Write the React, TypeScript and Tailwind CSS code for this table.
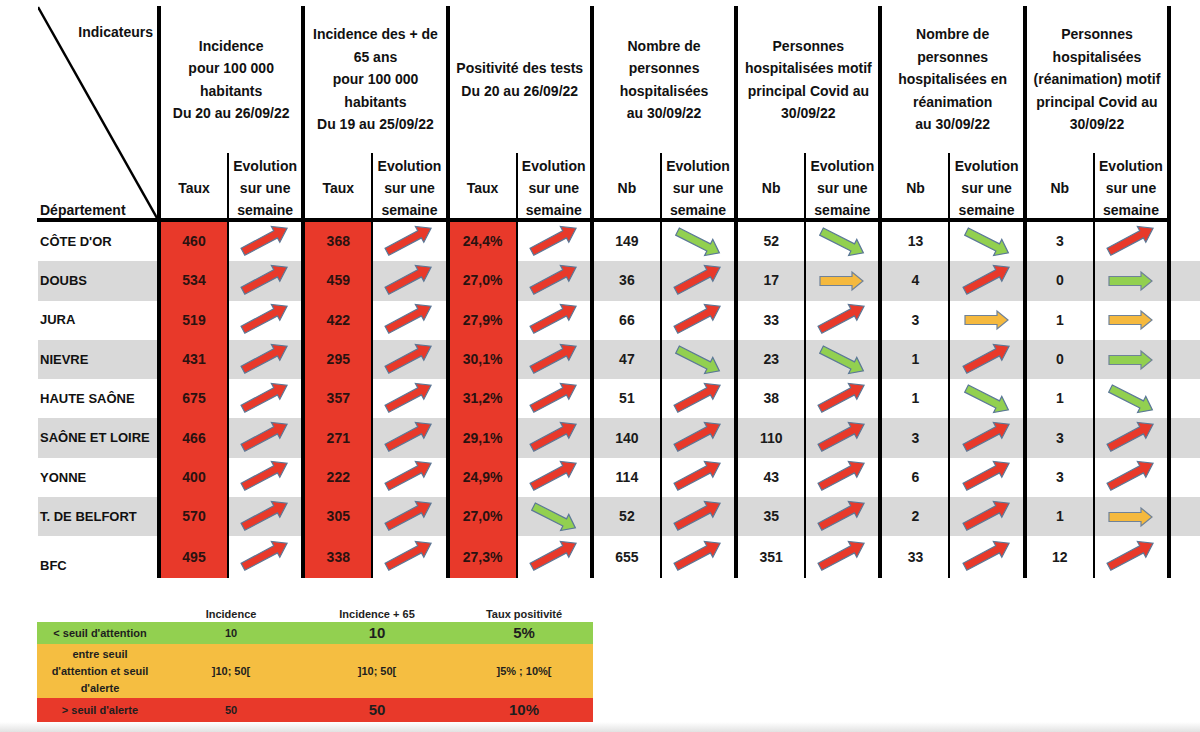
type Dir = 'u' | 'd' | 'y' | 'g'

const groups = [
  { title: ['Incidence', 'pour 100 000', 'habitants', 'Du 20 au 26/09/22'], sub: 'Taux' },
  { title: ['Incidence des + de', '65 ans', 'pour 100 000', 'habitants', 'Du 19 au 25/09/22'], sub: 'Taux' },
  { title: ['Positivité des tests', 'Du 20 au 26/09/22'], sub: 'Taux' },
  { title: ['Nombre de', 'personnes', 'hospitalisées', 'au 30/09/22'], sub: 'Nb' },
  { title: ['Personnes', 'hospitalisées motif', 'principal Covid au', '30/09/22'], sub: 'Nb' },
  { title: ['Nombre de', 'personnes', 'hospitalisées en', 'réanimation', 'au 30/09/22'], sub: 'Nb' },
  { title: ['Personnes', 'hospitalisées', '(réanimation) motif', 'principal Covid au', '30/09/22'], sub: 'Nb' },
]

const rows: { name: string; v: string[]; a: Dir[] }[] = [
  { name: "CÔTE D'OR", v: ['460', '368', '24,4%', '149', '52', '13', '3'], a: ['u', 'u', 'u', 'd', 'd', 'd', 'u'] },
  { name: 'DOUBS', v: ['534', '459', '27,0%', '36', '17', '4', '0'], a: ['u', 'u', 'u', 'u', 'y', 'u', 'g'] },
  { name: 'JURA', v: ['519', '422', '27,9%', '66', '33', '3', '1'], a: ['u', 'u', 'u', 'u', 'u', 'y', 'y'] },
  { name: 'NIEVRE', v: ['431', '295', '30,1%', '47', '23', '1', '0'], a: ['u', 'u', 'u', 'd', 'd', 'u', 'g'] },
  { name: 'HAUTE SAÔNE', v: ['675', '357', '31,2%', '51', '38', '1', '1'], a: ['u', 'u', 'u', 'u', 'u', 'd', 'd'] },
  { name: 'SAÔNE ET LOIRE', v: ['466', '271', '29,1%', '140', '110', '3', '3'], a: ['u', 'u', 'u', 'u', 'u', 'u', 'u'] },
  { name: 'YONNE', v: ['400', '222', '24,9%', '114', '43', '6', '3'], a: ['u', 'u', 'u', 'u', 'u', 'u', 'u'] },
  { name: 'T. DE BELFORT', v: ['570', '305', '27,0%', '52', '35', '2', '1'], a: ['u', 'u', 'd', 'u', 'u', 'u', 'y'] },
  { name: 'BFC', v: ['495', '338', '27,3%', '655', '351', '33', '12'], a: ['u', 'u', 'u', 'u', 'u', 'u', 'u'] },
]

function Arrow({ dir }: { dir: Dir }) {
  if (dir === 'y' || dir === 'g') {
    return (
      <svg width="56" height="36" viewBox="0 0 56 36">
        <polygon
          points="6,13.5 38,13.5 38,9 49,18 38,27 38,22.5 6,22.5"
          fill={dir === 'y' ? '#f5b93e' : '#92d050'}
          stroke="#6f8299"
          strokeWidth="1.2"
        />
      </svg>
    )
  }
  const up = dir === 'u'
  return (
    <svg width="56" height="36" viewBox="0 0 56 36">
      <g transform={up ? 'rotate(-28 28 16)' : 'rotate(27 28 18)'}>
        <polygon
          points={up ? '3,12 40,12 40,7 53,16 40,25 40,20 3,20' : '5,14 40,14 40,9 52,18 40,27 40,22 5,22'}
          fill={up ? '#e8392a' : '#92d050'}
          stroke="#5b7897"
          strokeWidth="1.2"
        />
      </g>
    </svg>
  )
}

export default function App() {
  return (
    <div className="h-[732px] w-[1200px] bg-white flex flex-col font-['Liberation_Sans',Arial,sans-serif] text-[#111]">
      <div className="pl-[38px] pt-[6px]">
        {/* header */}
        <div className="flex h-[212px]">
          <div className="relative w-[119px] flex flex-col justify-between">
            <svg className="absolute inset-0" width="119" height="212" viewBox="0 0 119 212">
              <line x1="0" y1="1" x2="119" y2="212" stroke="#000" strokeWidth="2.5" />
            </svg>
            <div className="self-end pr-[4px] mt-[15px] text-[14px] font-bold leading-[22px]">Indicateurs</div>
            <div className="pl-[2px] text-[14px] font-bold leading-[16px]">Département</div>
          </div>
          {groups.map((g, i) => (
            <div key={i} className="w-[144.3px] border-l-4 border-black flex flex-col">
              <div className="h-[147px] flex flex-col items-center justify-center text-center text-[14px] font-bold leading-[22.5px] whitespace-nowrap">
                {g.title.map((t, j) => (
                  <div key={j}>{t}</div>
                ))}
              </div>
              <div className="flex-1 flex text-[14px] font-bold">
                <div className="w-[66px] flex items-center justify-center pt-[5px]">{g.sub}</div>
                <div className="flex-1 border-l-2 border-black flex flex-col items-center justify-end leading-[22px] -mb-[3px]">
                  <div>Evolution</div>
                  <div>sur une</div>
                  <div>semaine</div>
                </div>
              </div>
            </div>
          ))}
          <div className="w-[4px] bg-black" />
        </div>
        <div className="h-[4px] w-[1134px] -ml-[1px] bg-black" />

        {/* rows */}
        {rows.map((r, ri) => {
          const last = ri === rows.length - 1
          return (
            <div
              key={r.name}
              className={`flex ${last ? 'h-[42px]' : 'h-[39.3px]'} ${ri % 2 === 1 ? 'bg-[#d9d9d9]' : 'bg-white'}`}
            >
              <div
                className={`w-[119px] pl-[2px] flex text-[13px] font-bold whitespace-nowrap ${last ? 'items-end pb-[3px]' : 'items-center'}`}
              >
                {r.name}
              </div>
              {r.v.map((v, i) => (
                <div key={i} className="w-[144.3px] border-l-4 border-black flex">
                  <div
                    className={`w-[66px] flex items-center justify-center text-[14px] font-bold ${i < 3 ? 'bg-[#e8392a] text-[#2a1210]' : 'text-[#1a1a1a]'}`}
                  >
                    {v}
                  </div>
                  <div className="flex-1 border-l-2 border-black flex items-center justify-center">
                    <Arrow dir={r.a[i]} />
                  </div>
                </div>
              ))}
              <div className="w-[4px] bg-black" />
            </div>
          )
        })}
      </div>

      {/* legend */}
      <div className="ml-[37px] mt-[28px] w-[556px] text-[11px] font-bold text-[#1e1e1e]">
        <div className="flex h-[16px] items-center">
          <div className="w-[126px]" />
          <div className="w-[136px] text-center">Incidence</div>
          <div className="w-[156px] text-center">Incidence + 65</div>
          <div className="w-[138px] text-center">Taux positivité</div>
        </div>
        <div className="flex h-[22px] items-center bg-[#92d050]">
          <div className="w-[126px] text-center">&lt; seuil d'attention</div>
          <div className="w-[136px] text-center">10</div>
          <div className="w-[156px] text-center text-[15px]">10</div>
          <div className="w-[138px] text-center text-[15px]">5%</div>
        </div>
        <div className="flex h-[54px] items-center bg-[#f5be41]">
          <div className="w-[126px] text-center leading-[17px]">
            entre seuil
            <br />
            d'attention et seuil
            <br />
            d'alerte
          </div>
          <div className="w-[136px] text-center">]10; 50[</div>
          <div className="w-[156px] text-center">]10; 50[</div>
          <div className="w-[138px] text-center">]5% ; 10%[</div>
        </div>
        <div className="flex h-[24px] items-center bg-[#e8392a]">
          <div className="w-[126px] text-center">&gt; seuil d'alerte</div>
          <div className="w-[136px] text-center">50</div>
          <div className="w-[156px] text-center text-[15px]">50</div>
          <div className="w-[138px] text-center text-[15px]">10%</div>
        </div>
      </div>

      <div className="mt-auto h-[10px] bg-linear-to-b from-white to-[#e2e2e2]" />
    </div>
  )
}
